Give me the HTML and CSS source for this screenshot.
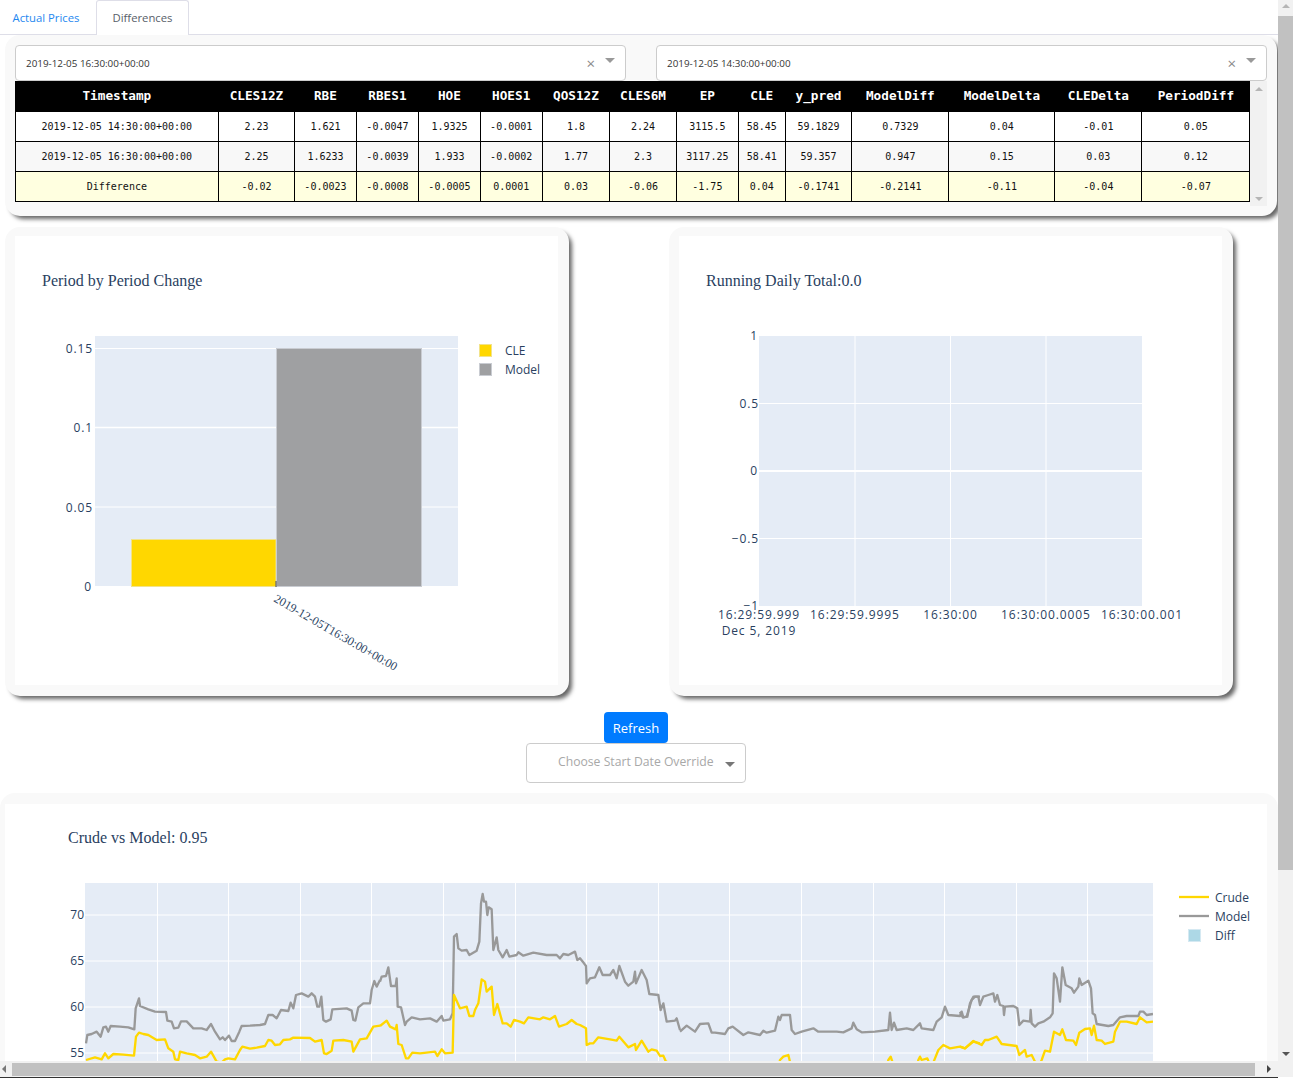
FILE: index.html
```html
<!DOCTYPE html>
<html lang="en">
<head>
  <meta charset="UTF-8">
  <title>Differences</title>
  <link rel="stylesheet" href="styles.css">
</head>
<body>
  <div class="tabs">
    <div class="tab tab-link">Actual Prices</div>
    <div class="tab tab-active">Differences</div>
  </div>

  <div class="panel panel-table">
    <div class="selects">
      <div class="select">
        <span class="select-value">2019-12-05 16:30:00+00:00</span>
        <span class="select-clear">×</span>
        <span class="arrow-down"></span>
      </div>
      <div class="select">
        <span class="select-value">2019-12-05 14:30:00+00:00</span>
        <span class="select-clear">×</span>
        <span class="arrow-down"></span>
      </div>
    </div>
    <div class="table-wrap">
      <table class="prices">
        <colgroup>
          <col class="c-time"><col class="c-1"><col class="c-2"><col class="c-3"><col class="c-2"><col class="c-4"><col class="c-5"><col class="c-6"><col class="c-4"><col class="c-7"><col class="c-6"><col class="c-8"><col class="c-9"><col class="c-10"><col class="c-11">
        </colgroup>
        <thead>
          <tr>
            <th>Timestamp</th><th>CLES12Z</th><th>RBE</th><th>RBES1</th><th>HOE</th><th>HOES1</th><th>QOS12Z</th><th>CLES6M</th><th>EP</th><th>CLE</th><th>y_pred</th><th>ModelDiff</th><th>ModelDelta</th><th>CLEDelta</th><th>PeriodDiff</th>
          </tr>
        </thead>
        <tbody>
          <tr>
            <td>2019-12-05 14:30:00+00:00</td><td>2.23</td><td>1.621</td><td>-0.0047</td><td>1.9325</td><td>-0.0001</td><td>1.8</td><td>2.24</td><td>3115.5</td><td>58.45</td><td>59.1829</td><td>0.7329</td><td>0.04</td><td>-0.01</td><td>0.05</td>
          </tr>
          <tr class="row-alt">
            <td>2019-12-05 16:30:00+00:00</td><td>2.25</td><td>1.6233</td><td>-0.0039</td><td>1.933</td><td>-0.0002</td><td>1.77</td><td>2.3</td><td>3117.25</td><td>58.41</td><td>59.357</td><td>0.947</td><td>0.15</td><td>0.03</td><td>0.12</td>
          </tr>
          <tr class="row-diff">
            <td>Difference</td><td>-0.02</td><td>-0.0023</td><td>-0.0008</td><td>-0.0005</td><td>0.0001</td><td>0.03</td><td>-0.06</td><td>-1.75</td><td>0.04</td><td>-0.1741</td><td>-0.2141</td><td>-0.11</td><td>-0.04</td><td>-0.07</td>
          </tr>
        </tbody>
      </table>
      <div class="table-scroll">
        <span class="arrow-up"></span>
        <span class="arrow-down"></span>
      </div>
    </div>
  </div>

  <div class="charts">
    <div class="panel panel-chart">
      <svg class="chart" width="543" height="449" viewBox="15 236 543 449">
        <text class="chart-title" x="42" y="286">Period by Period Change</text>
        <rect class="plot-bg" x="95" y="336" width="363" height="250"/>
        <g class="grid">
          <line x1="95" x2="458" y1="348.5" y2="348.5"/>
          <line x1="95" x2="458" y1="427.5" y2="427.5" class="grid-thick"/>
          <line x1="95" x2="458" y1="507" y2="507"/>
        </g>
        <rect class="bar-cle" x="131.5" y="539.5" width="144.5" height="47"/>
        <rect class="bar-model" x="276.5" y="348.5" width="145" height="238"/>
        <line class="tick" x1="276" x2="276" y1="581" y2="587"/>
        <g class="axis axis-y axis-num">
          <text x="93" y="353">0.15</text>
          <text x="93" y="432">0.1</text>
          <text x="93" y="512">0.05</text>
          <text x="92" y="591">0</text>
        </g>
        <text class="label-rotated" transform="translate(273 601) rotate(30)">2019-12-05T16:30:00+00:00</text>
        <rect class="bar-cle" x="479.5" y="344.5" width="12" height="12"/>
        <rect class="bar-model" x="479.5" y="363.5" width="12" height="12"/>
        <g class="axis">
          <text x="505" y="355">CLE</text>
          <text x="505" y="374">Model</text>
        </g>
      </svg>
    </div>
    <div class="panel panel-chart">
      <svg class="chart" width="543" height="449" viewBox="679 236 543 449">
        <text class="chart-title" x="706" y="286">Running Daily Total:0.0</text>
        <rect class="plot-bg" x="759" y="336" width="383" height="270"/>
        <g class="grid">
          <line x1="855" x2="855" y1="336" y2="606"/>
          <line x1="950.5" x2="950.5" y1="336" y2="606"/>
          <line x1="1046" x2="1046" y1="336" y2="606"/>
          <line x1="759" x2="1142" y1="403.5" y2="403.5"/>
          <line x1="759" x2="1142" y1="471" y2="471" class="grid-zero"/>
          <line x1="759" x2="1142" y1="538.5" y2="538.5"/>
        </g>
        <g class="axis axis-y axis-num">
          <text x="758" y="340">1</text>
          <text x="759" y="408">0.5</text>
          <text x="758" y="475">0</text>
          <text x="759" y="543">−0.5</text>
          <text x="759" y="610">−1</text>
        </g>
        <g class="axis axis-x axis-time">
          <text x="759" y="619">16:29:59.999</text>
          <text x="855" y="619">16:29:59.9995</text>
          <text x="950.5" y="619">16:30:00</text>
          <text x="1046" y="619">16:30:00.0005</text>
          <text x="1142" y="619">16:30:00.001</text>
          <text x="759" y="635">Dec 5, 2019</text>
        </g>
      </svg>
    </div>
  </div>

  <div class="controls">
    <button class="btn-refresh">Refresh</button>
    <div class="select-override">
      <span class="override-text">Choose Start Date Override</span>
      <span class="arrow-down"></span>
    </div>
  </div>

  <div class="panel panel-wide">
    <svg class="chart" width="1262" height="300" viewBox="5 804 1262 300">
      <defs>
        <clipPath id="plot-clip"><rect x="85" y="883" width="1068" height="221"/></clipPath>
      </defs>
      <text class="chart-title" x="68" y="843">Crude vs Model: 0.95</text>
      <rect class="plot-bg" x="85" y="883" width="1068" height="221"/>
      <g class="grid">
        <path d="M157.5 883V1104M228.5 883V1104M300.5 883V1104M371.5 883V1104M443.5 883V1104M515.5 883V1104M586.5 883V1104M658.5 883V1104M729.5 883V1104M801.5 883V1104M873.5 883V1104M944.5 883V1104M1016.5 883V1104M1087.5 883V1104"/>
        <path d="M85 915H1153M85 961H1153M85 1007H1153M85 1053H1153"/>
      </g>
      <g clip-path="url(#plot-clip)">
        <!-- points are read off 3x crops, so each stretch keeps its crop's origin -->
        <g transform="translate(80 880) scale(.33333)">
          <polyline class="line-model" points="18,490 22,465 35,462 50,455 62,470 70,442 78,440 85,455 92,438 120,440 145,442 163,448 167,385 177,355 180,378 205,388 225,395 258,396 262,422 275,425 282,445 295,443 303,424 320,424 340,445 365,445 380,450 393,432 405,455 420,478 428,472 435,480 447,467 455,483 465,483 478,455 485,438 510,437 540,435 555,432 565,405 578,405 590,415 603,390 625,393 632,368 640,385 648,345 665,340 685,350 695,340 705,350 712,380 718,380 724,350 730,420 738,425 752,418 757,388 800,385 815,392 820,420 826,422 835,382 850,370 870,370 875,330 883,303 890,320 900,300"/>
          <polyline class="line-crude" points="18,540 45,532 65,538 75,520 85,535 100,522 130,524 162,527 168,470 177,458 190,462 205,465 230,480 255,478 265,505 280,515 285,538 295,540 300,515 320,520 345,525 360,535 380,530 393,515 410,545 425,548 435,538 445,535 465,538 480,510 487,500 510,506 530,503 555,498 565,480 575,482 585,495 600,493 610,480 630,478 640,473 690,474 705,485 725,480 732,520 740,522 755,512 760,482 790,480 815,485 820,515 840,478 860,475 880,440 900,437"/>
        </g>
        <g transform="translate(380 880) scale(.33333)">
          <polyline class="line-model" points="0,305 5,290 18,288 25,262 33,318 47,318 50,295 53,380 63,382 75,435 80,425 95,412 120,418 150,415 170,425 185,408 190,422 210,418 218,400 222,170 230,162 235,205 245,212 260,210 268,225 290,212 298,185 303,70 308,42 312,65 318,65 322,105 326,82 335,88 340,210 350,172 355,210 368,232 380,210 388,230 410,225 415,217 430,227 460,218 500,225 530,225 540,235 550,222 565,225 585,215 592,240 600,235 612,250 618,258 620,310 630,295 645,292 658,262 668,285 690,285 700,270 710,295 718,258 735,305 745,317 760,305 765,275 768,310 785,270 800,300 808,342 835,345 842,390 850,370 860,425 885,422 890,415 900,450"/>
          <polyline class="line-crude" points="0,438 20,422 30,440 47,448 50,435 55,492 65,495 78,535 85,535 97,518 120,520 165,515 172,528 185,508 195,520 218,518 222,345 240,385 260,380 268,408 280,408 285,390 295,370 305,298 315,305 320,335 335,320 342,405 352,372 368,430 380,430 392,440 402,420 420,425 432,430 445,412 480,418 490,412 510,418 525,408 537,440 560,432 575,420 590,432 600,435 618,445 620,495 630,490 640,490 655,472 690,478 710,482 718,470 745,502 765,492 768,510 785,482 805,515 815,508 830,512 840,528 850,527 858,545 900,560"/>
        </g>
        <g transform="translate(680 880) scale(.33333)">
          <polyline class="line-model" points="0,455 20,437 45,455 60,432 85,430 95,458 105,458 135,462 145,445 158,440 190,465 205,457 240,465 250,452 260,458 285,452 295,410 300,420 305,405 330,405 335,450 345,462 365,455 400,445 415,455 470,455 490,457 515,445 520,428 530,448 545,457 585,455 625,450 630,398 635,450 642,428 650,450 680,445 700,450 720,430 725,445 760,450 770,425 785,412 795,380 805,405 840,408 845,395 850,412 860,410 875,360 885,350 900,350"/>
          <polyline class="line-crude" points="295,560 300,540 310,530 325,525 330,545 340,560"/>
          <polyline class="line-crude" points="620,560 625,540 632,530 637,545 645,560"/>
          <polyline class="line-crude" points="710,560 715,540 720,530 725,540 742,535 748,550 755,560 765,535 775,510 790,495 810,505 840,500 855,505 880,485 900,490"/>
        </g>
        <g transform="translate(960 880) scale(.33333)">
          <polyline class="line-model" points="0,395 8,412 22,410 30,370 40,350 55,350 60,375 70,350 85,345 100,340 105,365 112,345 120,375 130,378 132,405 135,380 160,378 172,385 178,435 190,422 210,425 212,390 215,430 225,440 235,430 250,425 270,412 278,400 282,280 290,295 300,365 307,262 317,315 335,325 342,338 355,320 358,295 365,315 385,302 393,325 398,400 405,405 410,432 445,438 460,435 480,412 500,408 535,408 540,395 550,395 560,405 579,402"/>
          <polyline class="line-crude" points="0,500 15,505 40,483 65,495 75,480 85,480 110,470 125,492 170,498 178,525 195,510 200,530 215,525 225,545 235,560 245,540 255,512 270,515 282,455 300,465 307,448 318,480 340,482 348,495 358,458 375,447 390,445 395,465 402,437 410,480 425,482 435,492 460,485 465,455 480,425 500,425 530,432 540,412 560,427 579,425"/>
        </g>
      </g>
      <g class="axis axis-y">
        <text x="84" y="919">70</text>
        <text x="84" y="965">65</text>
        <text x="84" y="1011">60</text>
        <text x="84" y="1057">55</text>
      </g>
      <line class="line-crude" x1="1179" x2="1209" y1="897" y2="897"/>
      <line class="line-model" x1="1179" x2="1209" y1="916" y2="916"/>
      <rect class="swatch-diff" x="1188.5" y="929.5" width="12" height="12"/>
      <g class="axis">
        <text x="1215" y="902">Crude</text>
        <text x="1215" y="921">Model</text>
        <text x="1215" y="940">Diff</text>
      </g>
    </svg>
  </div>

  <div class="vscroll">
    <span class="arrow-up"></span>
    <div class="vscroll-thumb"></div>
    <span class="arrow-down"></span>
  </div>
  <div class="hscroll">
    <span class="arrow-left"></span>
    <div class="hscroll-thumb"></div>
    <span class="arrow-right"></span>
  </div>
</body>
</html>
```

FILE: styles.css
```css
html, body {
  height: 100%;
}

body {
  margin: 0;
  overflow: hidden;
  position: relative;
  background: #fff;
  font-family: "Open Sans", "Liberation Sans", sans-serif;
  color: #2a3f5f;
}

/* tabs */
.tabs {
  display: flex;
  height: 35px;
  box-sizing: border-box;
  border-bottom: 1px solid #dedee8;
  font-size: 11.3px;
}

.tab {
  display: flex;
  align-items: center;
  justify-content: center;
  height: 35px;
  padding-bottom: 1px;
  box-sizing: border-box;
}

.tab-link {
  width: 96px;
  padding-right: 4px;
  color: #1f88f0;
}

.tab-active {
  width: 93px;
  color: #586069;
  background: #fff;
  border: 1px solid #dedee8;
  border-top-left-radius: 3px;
  border-top-right-radius: 3px;
  border-bottom: 0;
}

/* cards */
.panel {
  background: #f9f9f9;
  border-radius: 15px;
  box-shadow: 4px 4px 4px -1px #666;
  box-sizing: border-box;
}

.panel-table {
  width: 1272px;
  height: 181px;
  margin-left: 5px;
  padding: 10px;
}

.selects {
  display: flex;
  gap: 30px;
}

.select {
  flex: 1;
  display: flex;
  align-items: center;
  height: 36px;
  padding: 0 10px;
  box-sizing: border-box;
  background: #fff;
  border: 1px solid #ccc;
  border-radius: 4px;
  font-size: 9.85px;
  color: #333;
}

.select-value {
  flex: 1;
}

.select-clear {
  font-size: 15px;
  color: #8a8a8a;
  margin-right: 10px;
}

.select .arrow-down {
  margin-bottom: 5px;
  border-top-color: #999;
  border-width: 5px 5px 0;
}

/* table */
.table-wrap {
  display: flex;
}

.prices {
  width: 1235px;
  height: 121px;
  table-layout: fixed;
  border-collapse: collapse;
  font-family: "DejaVu Sans Mono", "Liberation Mono", monospace;
  font-size: 10px;
  color: #111;
  text-align: center;
  background: #fff;
}

.prices th {
  height: 27px;
  padding: 0 0 2px;
  background: #000;
  color: #fff;
  font-size: 12.7px;
  border: 1px solid #000;
}

.prices td {
  height: 27px;
  padding: 0 0 1px;
  border: 1px solid #000;
}

.row-alt td {
  background: #f8f8f8;
}

.row-diff td {
  background: #ffffe0;
}

.c-time { width: 202.7px; }
.c-1 { width: 76.5px; }
.c-2 { width: 61.5px; }
.c-3 { width: 62.5px; }
.c-4 { width: 62px; }
.c-5 { width: 67.5px; }
.c-6 { width: 66.7px; }
.c-7 { width: 46.8px; }
.c-8 { width: 97px; }
.c-9 { width: 106px; }
.c-10 { width: 87px; }
.c-11 { width: 108px; }

.table-scroll {
  flex: 1;
  height: 125px;
  padding: 6px 0 5px;
  box-sizing: border-box;
  display: flex;
  flex-direction: column;
  align-items: center;
  justify-content: space-between;
  background: #f1f1f1;
}

/* triangles for the scrollbars and selects */
.arrow-up, .arrow-down, .arrow-left, .arrow-right {
  display: block;
  width: 0;
  height: 0;
  border-style: solid;
  border-color: transparent;
}

.arrow-up {
  border-width: 0 4px 4px;
  border-bottom-color: #b5b5b5;
}

.arrow-down {
  border-width: 4px 4px 0;
  border-top-color: #b5b5b5;
}

.arrow-left {
  border-width: 4px 4px 4px 0;
  border-right-color: #777;
}

.arrow-right {
  border-width: 4px 0 4px 4px;
  border-left-color: #444;
}

/* charts */
.charts {
  display: flex;
  gap: 100px;
  margin: 11px 0 0 5px;
}

.panel-chart {
  width: 564px;
  height: 469px;
  padding: 9px 11px 11px 10px;
}

.chart {
  display: block;
  background: #fff;
}

.chart-title {
  font-family: "Liberation Serif", serif;
  font-size: 16px;
  fill: #2a3f5f;
}

.plot-bg {
  fill: #e5ecf6;
}

.grid line, .grid path {
  stroke: #fff;
  stroke-width: 1;
  fill: none;
}

.grid .grid-thick {
  stroke-width: 1.5;
}

.grid .grid-zero {
  stroke-width: 2;
}

.tick {
  stroke: #444;
  stroke-width: 1;
}

.bar-cle {
  fill: #ffd700;
  stroke: #f2e38a;
  stroke-width: 1;
}

.bar-model {
  fill: #9fa0a2;
  stroke: #c9ccd2;
  stroke-width: 1;
}

.swatch-diff {
  fill: #add8e6;
  stroke: #d5e9f2;
  stroke-width: 1;
}

.axis text {
  font-family: "Open Sans", sans-serif;
  font-size: 12px;
  fill: #2a3f5f;
}

.axis-y text {
  text-anchor: end;
}

.axis-x text {
  text-anchor: middle;
}

.axis-num text {
  letter-spacing: .9px;
}

.axis-time text {
  letter-spacing: .9px;
}

.label-rotated {
  font-family: "Liberation Serif", serif;
  font-size: 12px;
  fill: #2a3f5f;
}

.line-crude, .line-model {
  fill: none;
  stroke-linejoin: round;
}

.line-crude {
  stroke: #ffd700;
}

.line-model {
  stroke: #999;
}

polyline.line-crude, polyline.line-model {
  stroke-width: 7;
}

line.line-crude, line.line-model {
  stroke-width: 2.3;
}

/* refresh and override */
.controls {
  display: flex;
  flex-direction: column;
  align-items: center;
  width: 1272px;
  margin-top: 16px;
}

.btn-refresh {
  width: 64px;
  height: 31px;
  padding: 0;
  border: 0;
  border-radius: 4px;
  background: #007bff;
  color: #fff;
  font-family: "Open Sans", sans-serif;
  font-size: 13px;
}

.select-override {
  display: flex;
  align-items: center;
  width: 220px;
  height: 40px;
  padding-left: 31px;
  box-sizing: border-box;
  border: 1px solid #ccc;
  border-radius: 4px;
  font-size: 12.2px;
  color: #a8a8a8;
}

.override-text {
  width: 167px;
  padding-bottom: 4px;
}

.select-override .arrow-down {
  margin-top: 3px;
  border-top-color: #777;
  border-width: 5px 5px 0;
}

.panel-wide {
  width: 1278px;
  height: 400px;
  margin-top: 10px;
  padding: 11px 11px 0 5px;
  box-shadow: none;
}

/* page scrollbars */
.vscroll {
  position: absolute;
  top: 0;
  right: 0;
  width: 15px;
  height: 1077px;
  padding: 4px 0 21px;
  box-sizing: border-box;
  display: flex;
  flex-direction: column;
  align-items: center;
  background: #f1f1f1;
}

.vscroll-thumb {
  flex: none;
  width: 100%;
  height: 854px;
  margin: 8px 0 auto;
  background: #c1c1c1;
}

.vscroll .arrow-down {
  border-top-color: #555;
}

.hscroll {
  position: absolute;
  left: 0;
  bottom: 0;
  width: 1278px;
  height: 17px;
  padding: 0 7px 0 2px;
  box-sizing: border-box;
  display: flex;
  align-items: center;
  background: #f1f1f1;
  border-bottom: 1px solid #333;
}

.hscroll-thumb {
  flex: none;
  width: 1243px;
  height: 13px;
  margin: 0 auto 0 6px;
  background: #c1c1c1;
}
```
